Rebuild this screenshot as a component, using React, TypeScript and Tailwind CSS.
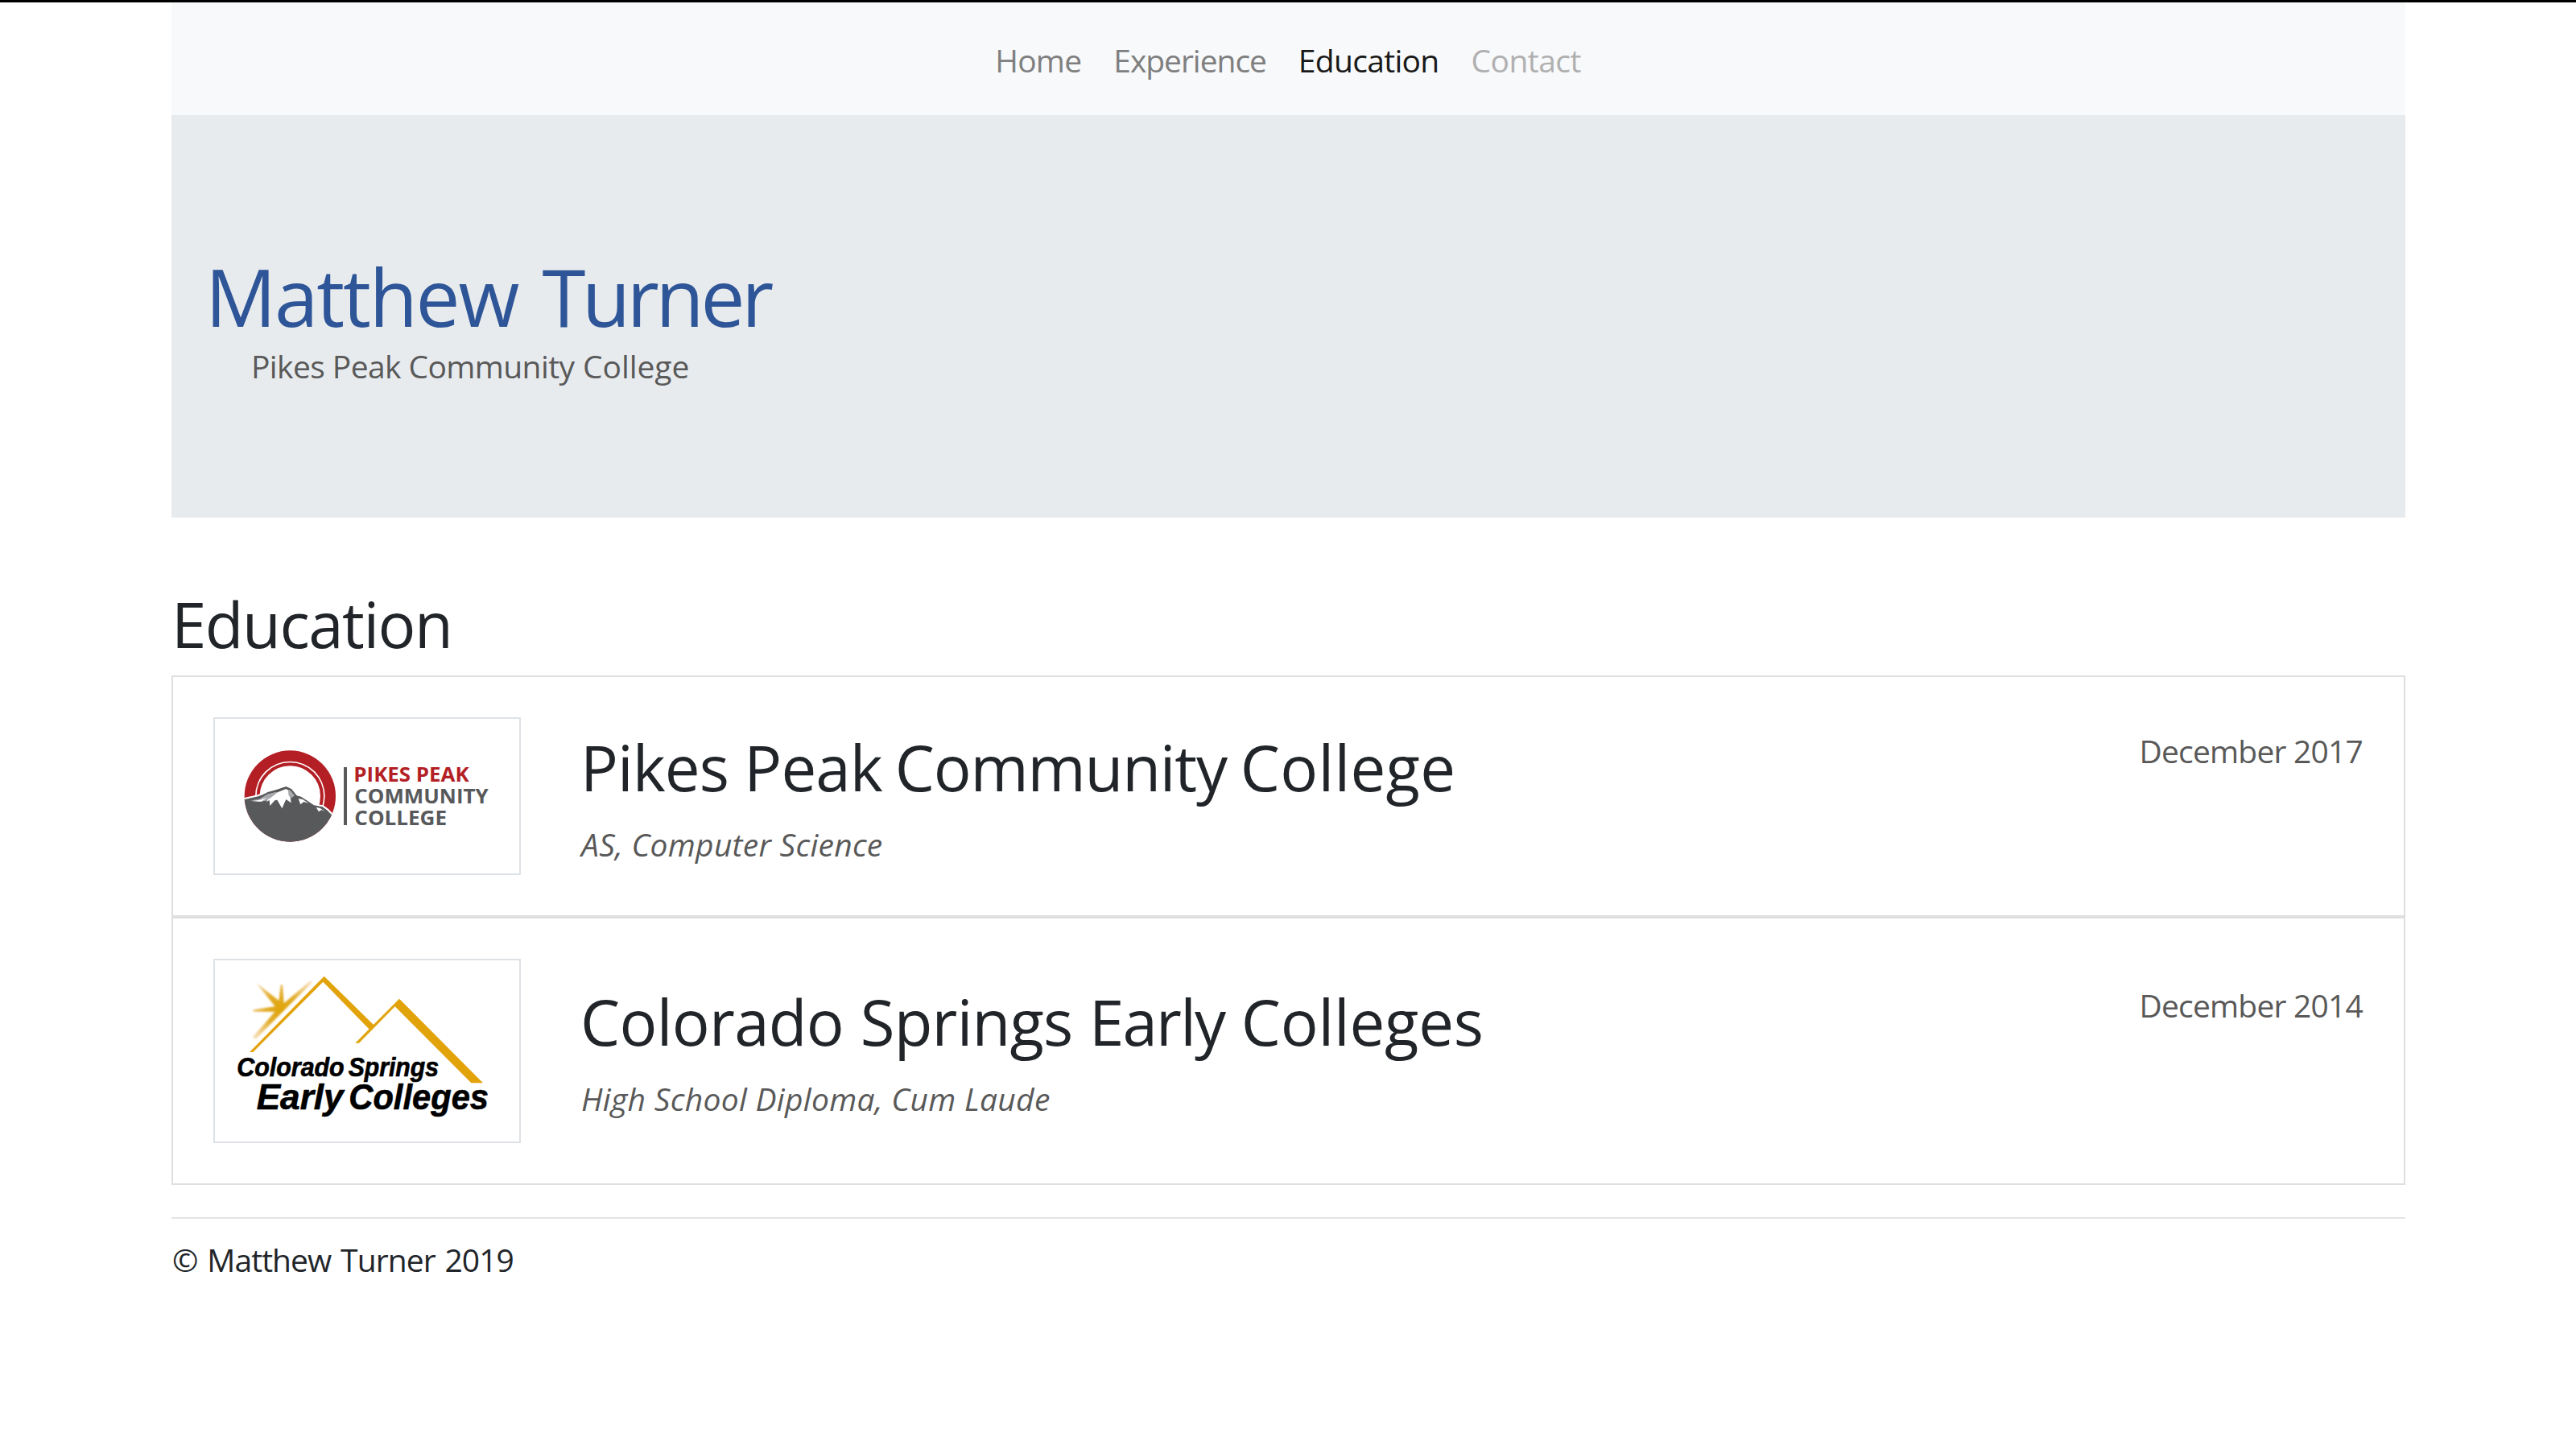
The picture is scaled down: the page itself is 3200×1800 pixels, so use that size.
import React from 'react';

function PikesPeakLogo() {
  return (
    <svg viewBox="51 39 1134 576" className="block h-[192px] w-[378px]">
      <defs>
        <clipPath id="badge">
          <circle cx="331" cy="327" r="170" />
        </clipPath>
      </defs>
      <circle cx="331" cy="327" r="170" fill="#b41f25" />
      <circle cx="331" cy="327" r="130" fill="#fff" />
      <circle cx="331" cy="327" r="119" fill="#fff" stroke="#b41f25" strokeWidth="12" />
      <g clipPath="url(#badge)">
        <g transform="translate(120 135)">
          <path
            d="M20 207 L42 204 L92 193 L110 186 L128 177 L160 168 L196 156 L216 165 L236 190 L252 194 L280 212 L300 226 L332 232 L350 245 L372 268 L380 380 L20 380Z"
            fill="#58595b"
            stroke="#fff"
            strokeWidth="13"
            strokeLinejoin="round"
            paintOrder="stroke"
          />
          <path d="M62 208 L96 203 L128 184 L158 177 L172 190 L158 205 L136 205 L128 208 L100 213Z" fill="#a7a9ac" />
          <path d="M70 211 L98 206 L124 198 L104 212Z" fill="#fff" />
          <path d="M140 188 L152 183 L168 176 L196 165 L208 172 L215 217 L196 204 L181 238 L163 206 L154 208 L136 228 L134 207 L122 214 L132 200Z" fill="#fff" />
          <path d="M126 190 L148 180 L166 176 L150 190 L132 203Z" fill="#a7a9ac" />
          <path d="M203 167 L212 170 L228 190 L214 200 L206 190Z" fill="#a7a9ac" />
          <path d="M242 201 L258 204 L280 218 L262 213 L250 223Z" fill="#fff" />
          <path d="M308 234 L322 236 L342 250 L328 243 L318 250Z" fill="#fff" />
        </g>
      </g>
      <rect x="531" y="219" width="12" height="216" fill="#58595b" />
      <g fontFamily="'Open Sans', 'Noto Sans', sans-serif" fontWeight="700" fontSize="76">
        <text x="568" y="274" fill="#b41f25" textLength="430" lengthAdjust="spacingAndGlyphs">PIKES PEAK</text>
        <text x="571" y="355" fill="#58595b" textLength="499" lengthAdjust="spacingAndGlyphs">COMMUNITY</text>
        <text x="571" y="436" fill="#58595b" textLength="344" lengthAdjust="spacingAndGlyphs">COLLEGE</text>
      </g>
    </svg>
  );
}

function EarlyCollegesLogo() {
  return (
    <svg viewBox="51 39 1134 675" className="block h-[225px] w-[378px]">
      <defs>
        <radialGradient id="sun" gradientUnits="userSpaceOnUse" cx="298" cy="220" r="152">
          <stop offset="0" stopColor="#dfa408" />
          <stop offset="0.4" stopColor="#e2ad2c" />
          <stop offset="1" stopColor="#f9e3c4" />
        </radialGradient>
        <filter id="soft" x="-10%" y="-10%" width="120%" height="120%">
          <feGaussianBlur stdDeviation="2.5" />
        </filter>
      </defs>
      <g fill="url(#sun)" filter="url(#soft)">
        <path d="M204 122 L284 222 L303 226 L306 202Z" />
        <path d="M296 130 L303 130 L309 212 L298 226 L287 210Z" />
        <path d="M408 114 L413 122 L306 228 L290 214Z" />
        <path d="M194 223 L194 230 L298 231 L294 208Z" />
        <path d="M192 325 L202 334 L312 222 L294 208Z" />
      </g>
      <path d="M180 381 L458 98 L643 280 L628 298 L454 119 L193 381Z" fill="#e2a30a" />
      <path d="M574 347 L738 182 L1050 496 L1006 496 L722 211 L588 347Z" fill="#e2a30a" />
      <g fontFamily="'Liberation Sans', Arial, sans-serif" fontWeight="700" fontStyle="italic" fill="#000" stroke="#000" strokeWidth="2">
        <text x="133" y="471" fontSize="98" textLength="400" lengthAdjust="spacingAndGlyphs">Colorado</text>
        <text x="548" y="471" fontSize="98" textLength="337" lengthAdjust="spacingAndGlyphs">Springs</text>
        <text x="206" y="594" fontSize="134" textLength="324" lengthAdjust="spacingAndGlyphs">Early</text>
        <text x="550" y="594" fontSize="134" textLength="521" lengthAdjust="spacingAndGlyphs">Colleges</text>
      </g>
    </svg>
  );
}

type SchoolProps = {
  logo: React.ReactNode;
  name: React.ReactNode;
  degree: React.ReactNode;
  date: string;
  bodyClass: string;
};

function School({ logo, name, degree, date, bodyClass }: SchoolProps) {
  return (
    <article className="flex items-center border-2 border-[#dfdfdf] p-[50px]">
      <div className="shrink-0 border-2 border-[#dee2e6]">{logo}</div>
      <div className={'ml-[74px] flex flex-1 items-start justify-between ' + bodyClass}>
        <div>
          <h3 className="pt-px text-[78px] leading-[96px] text-[#212529]">{name}</h3>
          <p className="mt-[18px] pl-px text-[39px] italic leading-[60px] text-[#595959]">{degree}</p>
        </div>
        <p className="-mt-px mr-px text-[39px] leading-[60px] tracking-[-0.8px] text-[#595959]">{date}</p>
      </div>
    </article>
  );
}

export default function App() {
  return (
    <div className="min-h-[1800px] w-[3200px] border-t-[3px] border-black bg-white pl-[213px] pr-[212px] font-['Open_Sans','Noto_Sans',sans-serif] text-[#212529]">
      <nav className="flex h-[140px] justify-center gap-10 bg-[#f8f9fa] pr-px pt-[42px] text-[39px] leading-[60px] text-[#7f7f80]">
        <a className="tracking-[-0.77px]">Home</a>
        <a className="tracking-[-1.05px]">Experience</a>
        <a className="tracking-[-0.69px] text-[#191919]">Education</a>
        <a className="tracking-[-0.55px] text-[#b0b0b1]">Contact</a>
      </nav>
      <header className="h-[500px] bg-[#e8ebee] pl-[42px] pt-[167px]">
        <h1 className="text-[98px] leading-[116px] text-[#2e5597]">
          <span className="tracking-[-2.2px]">Matthew </span>
          <span className="pl-[7px] tracking-[-4.3px]">Turner</span>
        </h1>
        <p className="-mt-px pl-[57px] text-[39px] leading-[60px] text-[#595959]">
          <span className="tracking-[-0.6px]">Pikes Peak Community </span>
          <span className="pl-px tracking-[-0.05px]">College</span>
        </p>
      </header>
      <main>
        <h2 className="mb-4 mt-[84px] text-[78px] leading-[96px] tracking-[-1.5px]">Education</h2>
        <School
          logo={<PikesPeakLogo />}
          name={
            <>
              <span className="tracking-[-0.91px]">Pikes Peak</span>
              <span className="tracking-[-1.2px] [word-spacing:-3px]"> Community </span>
              <span className="pl-px tracking-[0.3px]">College</span>
            </>
          }
          degree={<span className="tracking-[0.27px]">AS, Computer Science</span>}
          date="December 2017"
          bodyClass="pt-[5px]"
        />
        <School
          logo={<EarlyCollegesLogo />}
          name={
            <>
              <span className="tracking-[-0.68px]">Colorado </span>
              <span className="pl-px tracking-[-0.8px]">Springs </span>
              <span className="pl-px tracking-[-1.8px]">Early </span>
              <span className="pl-[2px] tracking-[-0.2px]">Colleges</span>
            </>
          }
          degree={<span className="tracking-[0.3px]">High School Diploma, Cum Laude</span>}
          date="December 2014"
          bodyClass="pt-[4px]"
        />
      </main>
      <footer className="mt-10 border-t-2 border-[#e4e4e4] pl-px pt-[21px]">
        <p className="text-[39px] leading-[60px] tracking-[-0.92px] [word-spacing:2.5px]">© Matthew Turner 2019</p>
      </footer>
    </div>
  );
}
